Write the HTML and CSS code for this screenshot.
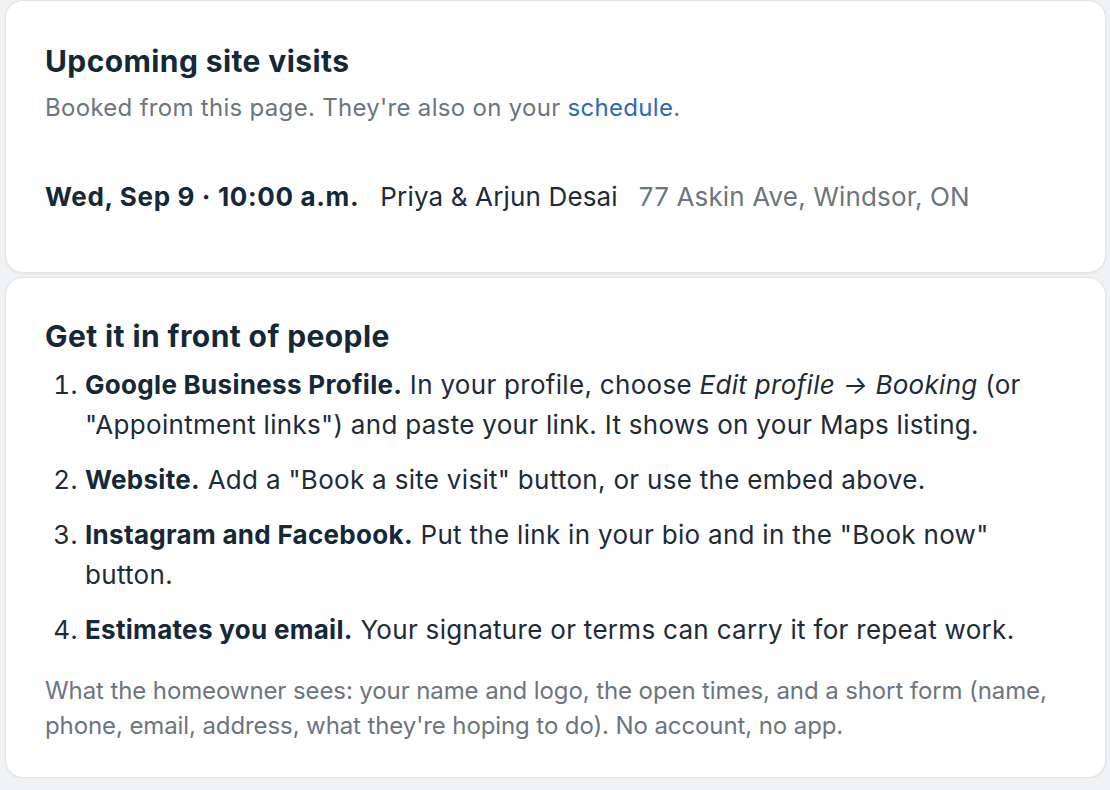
FILE: index.html
```html
<!DOCTYPE html>
<html lang="en">
<head>
<meta charset="utf-8">
<title>Site visits</title>
<link rel="stylesheet" href="styles.css">
</head>
<body>
<main class="page">
  <section class="card card-visits">
    <h2 class="card-title">Upcoming site visits</h2>
    <p class="subtitle">Booked from this page. They're also on your <a class="link" href="#">schedule</a>.</p>
    <div class="visit-row">
      <span class="visit-when">Wed, Sep 9 · 10:00 a.m.</span>
      <span class="visit-who">Priya &amp; Arjun Desai</span>
      <span class="visit-where">77 Askin Ave, Windsor, ON</span>
    </div>
  </section>
  <section class="card card-promote">
    <h2 class="card-title">Get it in front of people</h2>
    <ol class="steps">
      <li><strong>Google Business Profile.</strong> In your profile, choose <em>Edit profile → Booking</em> (or "Appointment links") and paste your link. It shows on your Maps listing.</li>
      <li><strong>Website.</strong> Add a "Book a site visit" button, or use the embed above.</li>
      <li><strong>Instagram and Facebook.</strong> Put the link in your bio and in the "Book now" button.</li>
      <li><strong>Estimates you email.</strong> Your signature or terms can carry it for repeat work.</li>
    </ol>
    <p class="note">What the homeowner sees: your name and logo, the open times, and a short form (name, phone, email, address, what they're hoping to do). No account, no app.</p>
  </section>
</main>
</body>
</html>
```

FILE: styles.css
```css
* { box-sizing: border-box; }

html, body {
  margin: 0;
  padding: 0;
  background: #f0f2f4;
}

body {
  font-family: Inter, "Noto Sans", "Liberation Sans", sans-serif;
  color: #1d2b38;
}

.page {
  display: flex;
  flex-direction: column;
  gap: 4px;
  padding: 0 4px 0 5px;
}

.card {
  background: #ffffff;
  border: 1px solid #e1e4e8;
  border-radius: 18px;
  box-shadow: 0 1px 3px rgba(20, 30, 45, 0.06);
  padding: 0 39px;
}

.card-visits {
  padding-top: 42px;
  padding-bottom: 58px;
}

.card-promote {
  padding-top: 40px;
  padding-bottom: 34px;
}

.card-title {
  margin: 0;
  font-size: 30px;
  line-height: 36px;
  font-weight: 700;
  color: #142838;
  letter-spacing: 0.4px;
}

.subtitle {
  margin: 13px 0 0;
  font-size: 24px;
  line-height: 32px;
  letter-spacing: 0.3px;
  color: #6b7580;
}

.link {
  color: #2a6bb6;
  text-decoration: none;
}

.visit-row {
  display: flex;
  align-items: baseline;
  gap: 21px;
  margin-top: 56px;
  font-size: 26px;
  line-height: 34px;
  letter-spacing: 0.15px;
}

.visit-when {
  font-weight: 700;
  color: #142838;
  letter-spacing: 0.65px;
}

.visit-who {
  color: #1d2b38;
}

.visit-where {
  color: #6b7580;
}

.steps {
  margin: 11px 0 0;
  padding-left: 40px;
  font-size: 26px;
  line-height: 40px;
  letter-spacing: 0.3px;
  color: #1d2b38;
  display: flex;
  flex-direction: column;
  gap: 15px;
}

.steps strong {
  font-weight: 700;
  color: #142838;
}

.note {
  margin: 23px 0 0;
  font-size: 24px;
  line-height: 35px;
  letter-spacing: -0.1px;
  color: #6b7580;
}
```
